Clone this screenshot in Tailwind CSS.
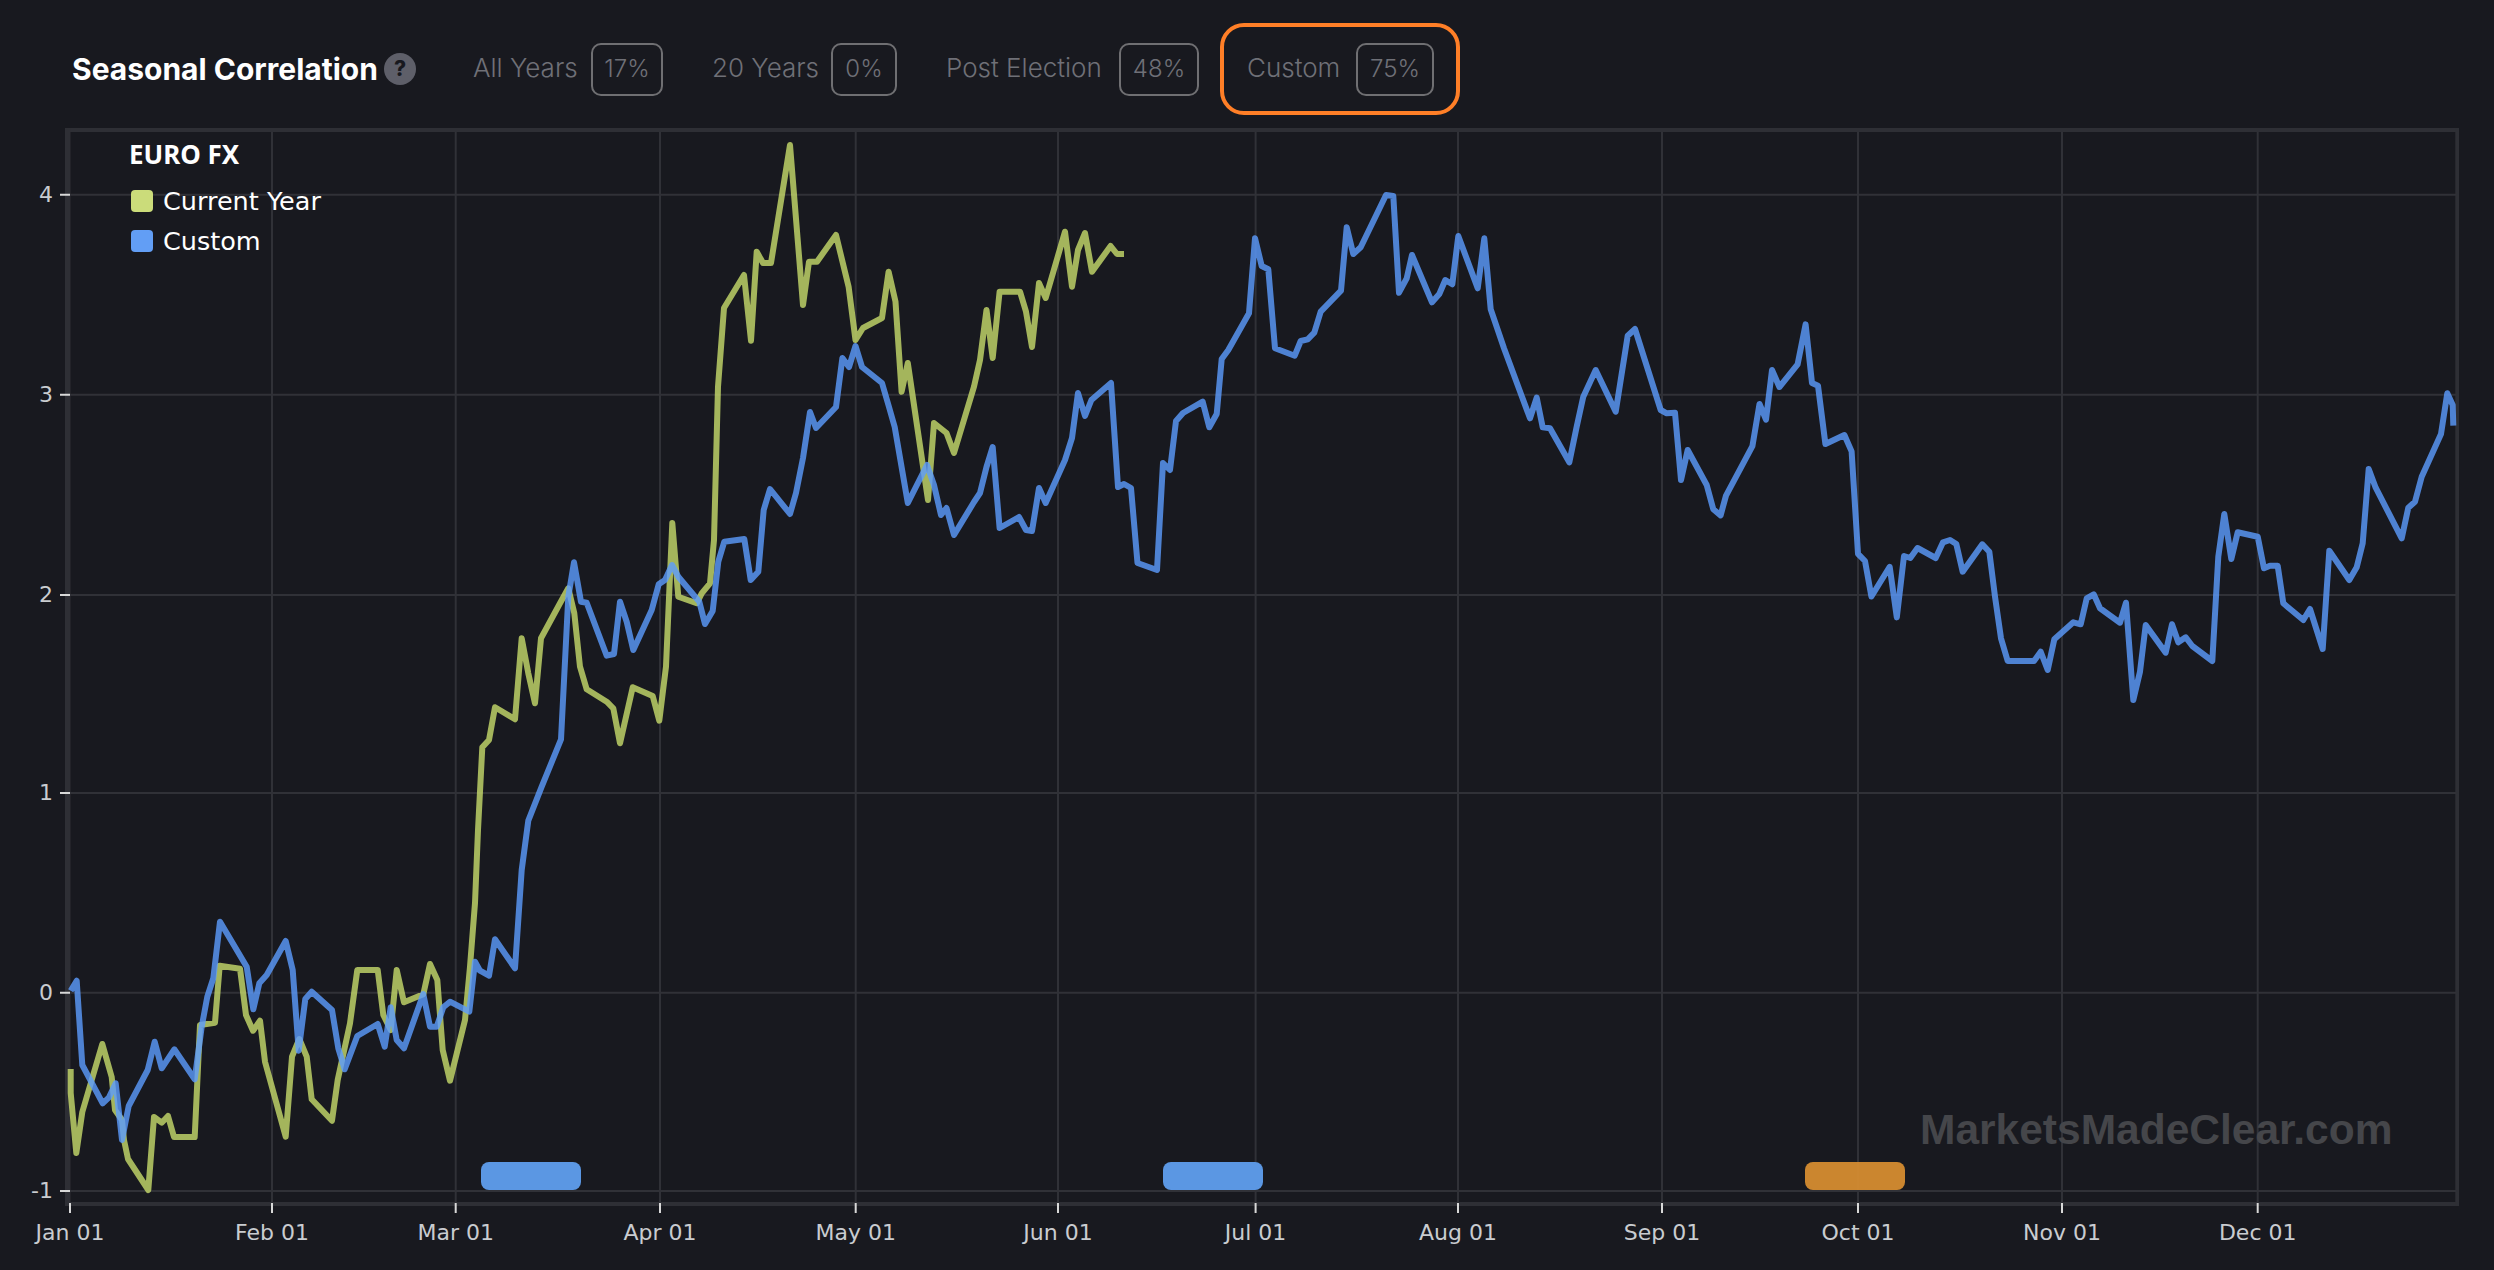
<!DOCTYPE html>
<html lang="en">
<head>
  <meta charset="UTF-8" />
  <title>Seasonal Correlation</title>
  <script src="https://cdn.jsdelivr.net/npm/@tailwindcss/browser@4"></script>
</head>
<body class="bg-[#18191f] h-screen overflow-hidden font-['Inter',sans-serif]">
  <!-- Header -->
  <header class="flex items-center h-[128px] pt-[10px] pl-[72px] text-[26px] font-light text-[#6f7077]">
    <h1 class="text-[30px] font-bold text-white w-[304px] whitespace-nowrap">Seasonal Correlation</h1>
    <span class="ml-[8px] flex items-center justify-center w-[32px] h-[32px] rounded-full bg-[#5e5f69] text-[#18191f] text-[21px] font-extrabold">?</span>
    <span class="ml-[57px] mb-[3px] w-[102px] whitespace-nowrap">All Years</span>
    <span class="ml-[16px] flex items-center justify-center w-[72px] h-[53px] rounded-[10px] border-2 border-[#6f6f72] text-[24px]">17%</span>
    <span class="ml-[49px] mb-[3px] w-[103px] whitespace-nowrap">20 Years</span>
    <span class="ml-[16px] flex items-center justify-center w-[66px] h-[53px] rounded-[10px] border-2 border-[#6f6f72] text-[24px]">0%</span>
    <span class="ml-[49px] mb-[3px] w-[156px] whitespace-nowrap">Post Election</span>
    <span class="ml-[17px] flex items-center justify-center w-[80px] h-[53px] rounded-[10px] border-2 border-[#6f6f72] text-[24px]">48%</span>
    <div class="ml-[21px] flex items-center w-[240px] h-[92px] pl-[23px] rounded-[24px] border-[4.5px] border-[#ff7f27]">
      <span class="mb-[3px] w-[92px] whitespace-nowrap">Custom</span>
      <span class="ml-[17px] flex items-center justify-center w-[78px] h-[53px] rounded-[10px] border-2 border-[#6f6f72] text-[24px]">75%</span>
    </div>
  </header>

  <!-- Chart -->
  <main class="relative w-[2494px] h-[1142px]">
    <svg class="block" width="2494" height="1142" viewBox="0 128 2494 1142">
      <g fill="#2e2f35">
        <rect x="65" y="128" width="2394" height="4" />
        <rect x="65" y="128" width="5.5" height="1078" />
        <rect x="65" y="1202" width="2394" height="4" />
        <rect x="2455.3" y="128" width="3.7" height="1078" />
      </g>
      <path stroke="#303137" stroke-width="2" fill="none" d="M272 132V1202M455.7 132V1202M660 132V1202M855.7 132V1202M1058 132V1202M1255.6 132V1202M1458 132V1202M1662 132V1202M1858 132V1202M2062 132V1202M2257.7 132V1202M70 194.7H2456M70 394.7H2456M70 595H2456M70 793H2456M70 992.7H2456M70 1191H2456" />
      <path stroke="#d8d8d8" stroke-width="2" fill="none" d="M60 194.7H70M60 394.7H70M60 595H70M60 793H70M60 992.7H70M60 1191H70M70 1203V1213M272 1203V1213M455.7 1203V1213M660 1203V1213M855.7 1203V1213M1058 1203V1213M1255.6 1203V1213M1458 1203V1213M1662 1203V1213M1858 1203V1213M2062 1203V1213M2257.7 1203V1213" />

      <g class="font-['DejaVu_Sans',sans-serif] text-[22px]" fill="#c9ccd0" text-anchor="end">
        <text x="53" y="202">4</text>
        <text x="53" y="402">3</text>
        <text x="53" y="602">2</text>
        <text x="53" y="800">1</text>
        <text x="53" y="1000">0</text>
        <text x="53" y="1198">-1</text>
      </g>
      <g class="font-['DejaVu_Sans',sans-serif] text-[22px]" fill="#c9ccd0" text-anchor="middle">
        <text x="70" y="1240">Jan 01</text>
        <text x="272" y="1240">Feb 01</text>
        <text x="455.7" y="1240">Mar 01</text>
        <text x="660" y="1240">Apr 01</text>
        <text x="855.7" y="1240">May 01</text>
        <text x="1058" y="1240">Jun 01</text>
        <text x="1255.6" y="1240">Jul 01</text>
        <text x="1458" y="1240">Aug 01</text>
        <text x="1662" y="1240">Sep 01</text>
        <text x="1858" y="1240">Oct 01</text>
        <text x="2062" y="1240">Nov 01</text>
        <text x="2257.7" y="1240">Dec 01</text>
      </g>

      <!-- Current Year -->
      <polyline fill="none" stroke="#c8dc6c" stroke-opacity="0.8" stroke-width="6" stroke-linejoin="round" points="70.7,1069 70.7,1093 76.3,1153 82.3,1112 102.3,1044 111.7,1077 115,1110 122,1120 124,1140 128,1159 148.3,1190 154,1117 161.7,1122.7 168,1116 174,1137 194.7,1137 200,1025 215,1022.7 219.7,965.7 240,968.7 246,1015 253,1030.7 260,1020.7 265,1061.7 285.7,1136.7 292,1056.7 299.3,1039 306.7,1056.7 311.7,1099.3 332,1120.7 337.7,1080 350,1023.3 357.3,970 377.7,970 383.3,1015 390.7,1030 396.7,970 404,1002.3 423.3,994.3 430,964 437.3,980 442.7,1050 450,1080.7 465,1020 470,966.7 475,903 478,830 482.3,747.3 489,740 495,707.3 515,719.3 521.7,638.3 528.3,673.3 535,703.3 541,638.3 560,603.3 568.3,588.3 574.3,613.3 580,666.7 586.7,689.3 606.7,701.7 613.3,708.3 620,743.3 632.7,687.3 652.7,696 659.3,720.7 666,666.7 672.3,523 678.3,596.7 696.7,603.3 701.7,593.3 710,583.3 714,540 718,386.7 724,308 744,275 751,340.7 756.7,251.7 763,263 771,263 790,145 803,305 809,261.7 817,261.7 836,235 848.6,286.7 855.5,340 863,328 882,318 888.6,271.7 895.5,301.7 901.6,391.7 907.8,363 928,500 934,423 946.5,433 954,453 974,386.7 980,360 986.5,310 992.7,358 999.6,291.7 1020,291.7 1026,311.7 1032,347 1039,283 1045.7,298 1065,231.7 1072,286.7 1078,250 1085,233 1092,271.7 1110.6,246 1117,254 1124,254" />
      <!-- Custom -->
      <polyline fill="none" stroke="#5c9cff" stroke-opacity="0.8" stroke-width="6" stroke-linejoin="round" points="70.7,990.7 76.7,980.7 82.3,1065 102.7,1103.3 109,1097.3 115.7,1083.3 122,1140 128.7,1106 147.7,1070 154.7,1041.7 161.7,1068.3 174.3,1049.3 194.7,1079.3 201.7,1026.7 207.3,996.7 213.3,978.3 220,921.7 246.7,966.7 253.3,1009.3 259.3,983.3 266.7,975 285.7,941 292.7,970 298.7,1050.7 305.3,999 311.7,991.7 332,1010 338.3,1048.3 344.7,1069.3 357.3,1036 377.7,1024 384.7,1046.7 390.7,1007.3 396.7,1040 404,1048.3 423.3,994 430,1026.7 436.7,1026.7 443.3,1007.3 450,1001.7 469.3,1011.7 475,961.7 480,970.7 489,975.7 495,939.3 515,968.3 521.7,870 528.3,820.7 541.7,786.7 561,739.3 568.3,596.7 574,562.3 581,601.7 586.7,602.7 606.7,655.7 614,654 620,601.7 626.7,621.7 633.3,650 651.7,610 658.7,584.3 665,580 672,565 678.3,576.7 699.3,601.7 705,624 712.7,611 718.3,561.7 724.3,541.7 744.3,539 750.7,580 758.3,571.7 763.7,510 770,489 790,514 796,493 803,458 810,412 816,428 836,407 842.4,358 849,367 855.5,346 862,367 882,383 889,407 894.7,427 907.8,503 927,465 934,485 941,515 946.5,508 954,535 974,502 980,493 986.5,467 992.7,447 999.6,528 1019,517 1026,530 1032,531 1039,488 1045.7,503 1065,460 1072,438 1078,393 1085,416 1091.4,400 1111,383 1118,487 1124,484 1131,488 1137.5,563 1157,570 1163,463 1170,470 1176,421 1183,413 1202.7,401.7 1209.3,427.3 1216.7,414 1221.7,359 1228.3,350 1249,313.3 1255,238.3 1261.7,266 1268.3,269.3 1275,348.3 1294.7,355.7 1300.7,341 1307.7,339.3 1314.3,332.7 1320.7,311.7 1341,290.7 1346.7,227.3 1353.3,254 1360.7,247.3 1386,195 1393.3,196 1399,292.7 1406.7,278.3 1412,255 1432,302.3 1439.3,294 1445.3,280 1452.3,284.3 1458.3,236 1477.7,288.3 1484.3,238.3 1490.7,309.3 1504,348.3 1530,418.3 1536.7,397.7 1542.7,427.3 1550,428.3 1569.3,462.3 1576.7,426.7 1583.3,396.7 1595.7,370 1615.7,411.7 1627.7,335.7 1635,329 1660.7,410 1666.7,413.3 1675,412.7 1681,480 1687.7,450 1706.7,485 1713.3,509.3 1720.6,515.4 1726,495.6 1752.4,446.2 1759.5,404 1766,419.7 1772,370 1779.4,387 1797.6,364.4 1805.6,324.4 1812,383 1818,385.7 1825.4,444 1844.4,435 1851.6,451.4 1858,553.8 1865,561 1871.4,596.5 1889.7,566.8 1896.8,617.4 1904,556 1910.3,558 1917.5,548 1935.7,558 1943,542.3 1950,540 1956.3,544 1962.7,571.7 1982.3,544.3 1989.3,551.7 1995,596.7 2001,638.3 2007.7,661 2034,661 2040.7,651.7 2047.7,670 2054.3,639.3 2073.3,622.3 2080.7,624.3 2086.7,598.3 2093.7,594.3 2100,608.3 2120,622.7 2126,602.7 2133.3,700 2140,671.7 2145.7,625 2165.7,652.7 2172,624.3 2178.3,642.3 2185.7,637.3 2192.3,646 2212.3,661 2218.3,556.7 2224.3,514 2231.3,559 2237.7,532.3 2257.7,536.7 2264,568.3 2270,565.7 2277.7,565.7 2283.3,603.3 2303.3,620 2310,609 2322.7,649 2329.3,550.7 2349.3,580 2356.7,567.3 2362.7,543.3 2368.7,469 2375.7,487.7 2401.7,538.3 2408.3,507.7 2415,501.7 2421.7,476.7 2441,434 2447.3,393.3 2452.7,405 2453.3,425.7" />

      <!-- Season bars -->
      <rect x="481" y="1162" width="100" height="28" rx="8" fill="#5b97e3" />
      <rect x="1163" y="1162" width="100" height="28" rx="8" fill="#5b97e3" />
      <rect x="1805" y="1162" width="100" height="28" rx="8" fill="#d58c30" fill-opacity="0.95" />
    </svg>

    <!-- Legend -->
    <div class="absolute left-[129px] top-[11px] text-white">
      <div class="h-[30px] text-[26px] leading-[30px] font-bold font-['Noto_Sans',sans-serif]">EURO FX</div>
      <div class="mt-[21px] flex items-center h-[22px] text-[25.5px] font-['DejaVu_Sans',sans-serif]">
        <span class="ml-[2px] w-[22px] h-[22px] rounded-[4px] bg-[#cbdc7a]"></span>
        <span class="ml-[10px]">Current Year</span>
      </div>
      <div class="mt-[18px] flex items-center h-[22px] text-[25.5px] font-['DejaVu_Sans',sans-serif]">
        <span class="ml-[2px] w-[22px] h-[22px] rounded-[4px] bg-[#629ef5]"></span>
        <span class="ml-[10px]">Custom</span>
      </div>
    </div>

    <!-- Watermark -->
    <div class="absolute left-[1920px] top-[979px] text-[42.5px] leading-[46px] font-bold text-[#45464a] font-['Liberation_Sans',sans-serif] whitespace-nowrap">MarketsMadeClear.com</div>
  </main>
</body>
</html>
